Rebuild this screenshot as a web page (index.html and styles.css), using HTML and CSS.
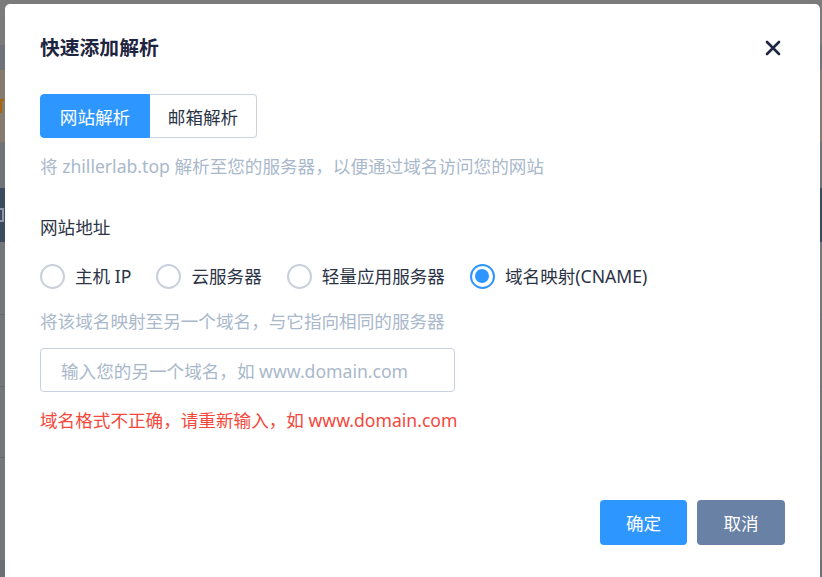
FILE: index.html
```html
<!DOCTYPE html>
<html lang="zh-CN">
<head>
<meta charset="utf-8">
<title>快速添加解析</title>
<link rel="stylesheet" href="styles.css">
</head>
<body>
<div class="page">
  <div class="band band-head"></div>
  <div class="band band-a"></div>
  <div class="band band-warn"><span class="mark mark-warn"></span></div>
  <div class="band band-a2"></div>
  <div class="band band-nav"><span class="mark mark-nav"></span></div>
  <div class="band band-row line"></div>
  <div class="band band-row2 line"></div>
  <div class="band band-row3 line"></div>
  <div class="band band-row4"></div>
  <div class="band band-foot"></div>
</div>

<div class="modal">
  <div class="modal-head">
    <h2 class="modal-title">快速添加解析</h2>
    <button class="close" aria-label="关闭">
      <svg width="16" height="16" viewBox="0 0 16 16"><path d="M2 2 L14 14 M14 2 L2 14" stroke="#1e2642" stroke-width="2.6" stroke-linecap="round" fill="none"/></svg>
    </button>
  </div>

  <div class="tabs">
    <div class="tab active">网站解析</div>
    <div class="tab">邮箱解析</div>
  </div>

  <p class="desc">将 zhillerlab.top 解析至您的服务器，以便通过域名访问您的网站</p>

  <div class="field-label">网站地址</div>

  <div class="radios">
    <label class="radio"><span class="dot"></span><span class="radio-text">主机 IP</span></label>
    <label class="radio"><span class="dot"></span><span class="radio-text">云服务器</span></label>
    <label class="radio"><span class="dot"></span><span class="radio-text">轻量应用服务器</span></label>
    <label class="radio checked"><span class="dot"></span><span class="radio-text">域名映射(CNAME)</span></label>
  </div>

  <p class="hint">将该域名映射至另一个域名，与它指向相同的服务器</p>

  <div class="input">输入您的另一个域名，如 www.domain.com</div>

  <p class="error">域名格式不正确，请重新输入，如 www.domain.com</p>

  <div class="actions">
    <button class="btn btn-primary">确定</button>
    <button class="btn btn-cancel">取消</button>
  </div>
</div>
</body>
</html>
```

FILE: styles.css
```css
* { box-sizing: border-box; }

html, body {
  margin: 0;
  padding: 0;
  width: 822px;
  height: 577px;
  overflow: hidden;
}

body {
  background: #787a7d;
  font-family: "Noto Sans", "Noto Sans CJK SC", sans-serif;
  position: relative;
}

.page {
  display: flex;
  flex-direction: column;
  width: 822px;
  height: 577px;
}

.band { width: 100%; position: relative; overflow: hidden; }
.band-head { height: 45px; background: #7b7b7c; }
.band-a { height: 25px; background: #6f7379; }
.band-warn { height: 72px; background: #857b6e; }
.band-a2 { height: 46px; background: #707479; }
.band-nav { height: 54px; background: #3c4a5f; }
.band-row { height: 73px; background: #74767a; }
.band-row2 { height: 72px; background: #74767a; }
.band-row3 { height: 71px; background: #74767a; }
.band-row4 { height: 102px; background: #74767a; }
.band-foot { height: 17px; background: #6c7075; }
.line { border-bottom: 1px solid #66696d; }

.mark {
  position: absolute;
  left: 0;
  width: 4px;
  height: 14px;
}
.mark-warn { top: 29px; border-left: 2px solid #a8650f; border-top: 2px solid #a8650f; }
.mark-nav { top: 20px; border: 2px solid #8d97a8; border-left: 0; }

.modal {
  position: absolute;
  left: 5px;
  top: 4px;
  width: 815px;
  height: 600px;
  background: #fff;
  border-radius: 5px;
  padding: 0 35px;
}

.modal-head {
  display: flex;
  align-items: center;
  justify-content: space-between;
  padding-top: 30px;
  height: 58px;
}

.modal-title {
  margin: 0;
  font-size: 19.8px;
  line-height: 28px;
  font-weight: 700;
  color: #1d2540;
}

.close {
  border: 0;
  background: none;
  padding: 0;
  margin-right: 4px;
  width: 16px;
  height: 16px;
  display: flex;
}

.tabs {
  display: flex;
  margin-top: 32px;
  height: 44px;
}

.tab {
  height: 44px;
  display: flex;
  align-items: center;
  justify-content: center;
  white-space: nowrap;
  font-size: 17.6px;
  color: #2b3346;
  border: 1px solid #ccd3de;
  padding: 0;
}
.tab:first-child { border-radius: 4px 0 0 4px; width: 110px; }
.tab:last-child { border-radius: 0 4px 4px 0; border-left: 0; width: 107px; }
.tab.active {
  background: #2e96ff;
  border-color: #2e96ff;
  color: #fff;
}

.desc {
  margin: 16px 0 0;
  font-size: 17.6px;
  line-height: 24px;
  color: #a9b8cb;
}

.field-label {
  margin-top: 37px;
  font-size: 17.6px;
  line-height: 24px;
  color: #2b3346;
}

.radios {
  margin-top: 24px;
  display: flex;
  align-items: center;
  gap: 25px;
  height: 26px;
}

.radio {
  display: flex;
  align-items: center;
  gap: 10px;
}

.dot {
  width: 25px;
  height: 25px;
  border-radius: 50%;
  border: 2px solid #c9cfdb;
  display: flex;
  align-items: center;
  justify-content: center;
}

.radio.checked .dot {
  border: 2.5px solid #2e96ff;
}
.radio.checked .dot::after {
  content: "";
  width: 14px;
  height: 14px;
  border-radius: 50%;
  background: #2e96ff;
}

.radio-text {
  font-size: 17.6px;
  line-height: 24px;
  color: #2b3346;
}

.hint {
  margin: 20px 0 0;
  font-size: 17.6px;
  line-height: 24px;
  color: #a9b8cb;
}

.input {
  margin-top: 15px;
  width: 415px;
  height: 44px;
  border: 1px solid #c9d1de;
  border-radius: 4px;
  padding-left: 20px;
  display: flex;
  align-items: center;
  font-size: 17.6px;
  color: #a9b8cb;
}

.error {
  margin: 16px 0 0;
  font-size: 17.6px;
  line-height: 24px;
  color: #f4483c;
}

.actions {
  margin-top: 68px;
  display: flex;
  justify-content: flex-end;
  gap: 10px;
}

.btn {
  height: 45px;
  border: 0;
  border-radius: 4px;
  color: #fff;
  font-family: inherit;
  font-size: 17.6px;
  padding: 0;
}
.btn-primary { width: 87px; background: #2e96ff; }
.btn-cancel { width: 88px; background: #6881a4; }
```
